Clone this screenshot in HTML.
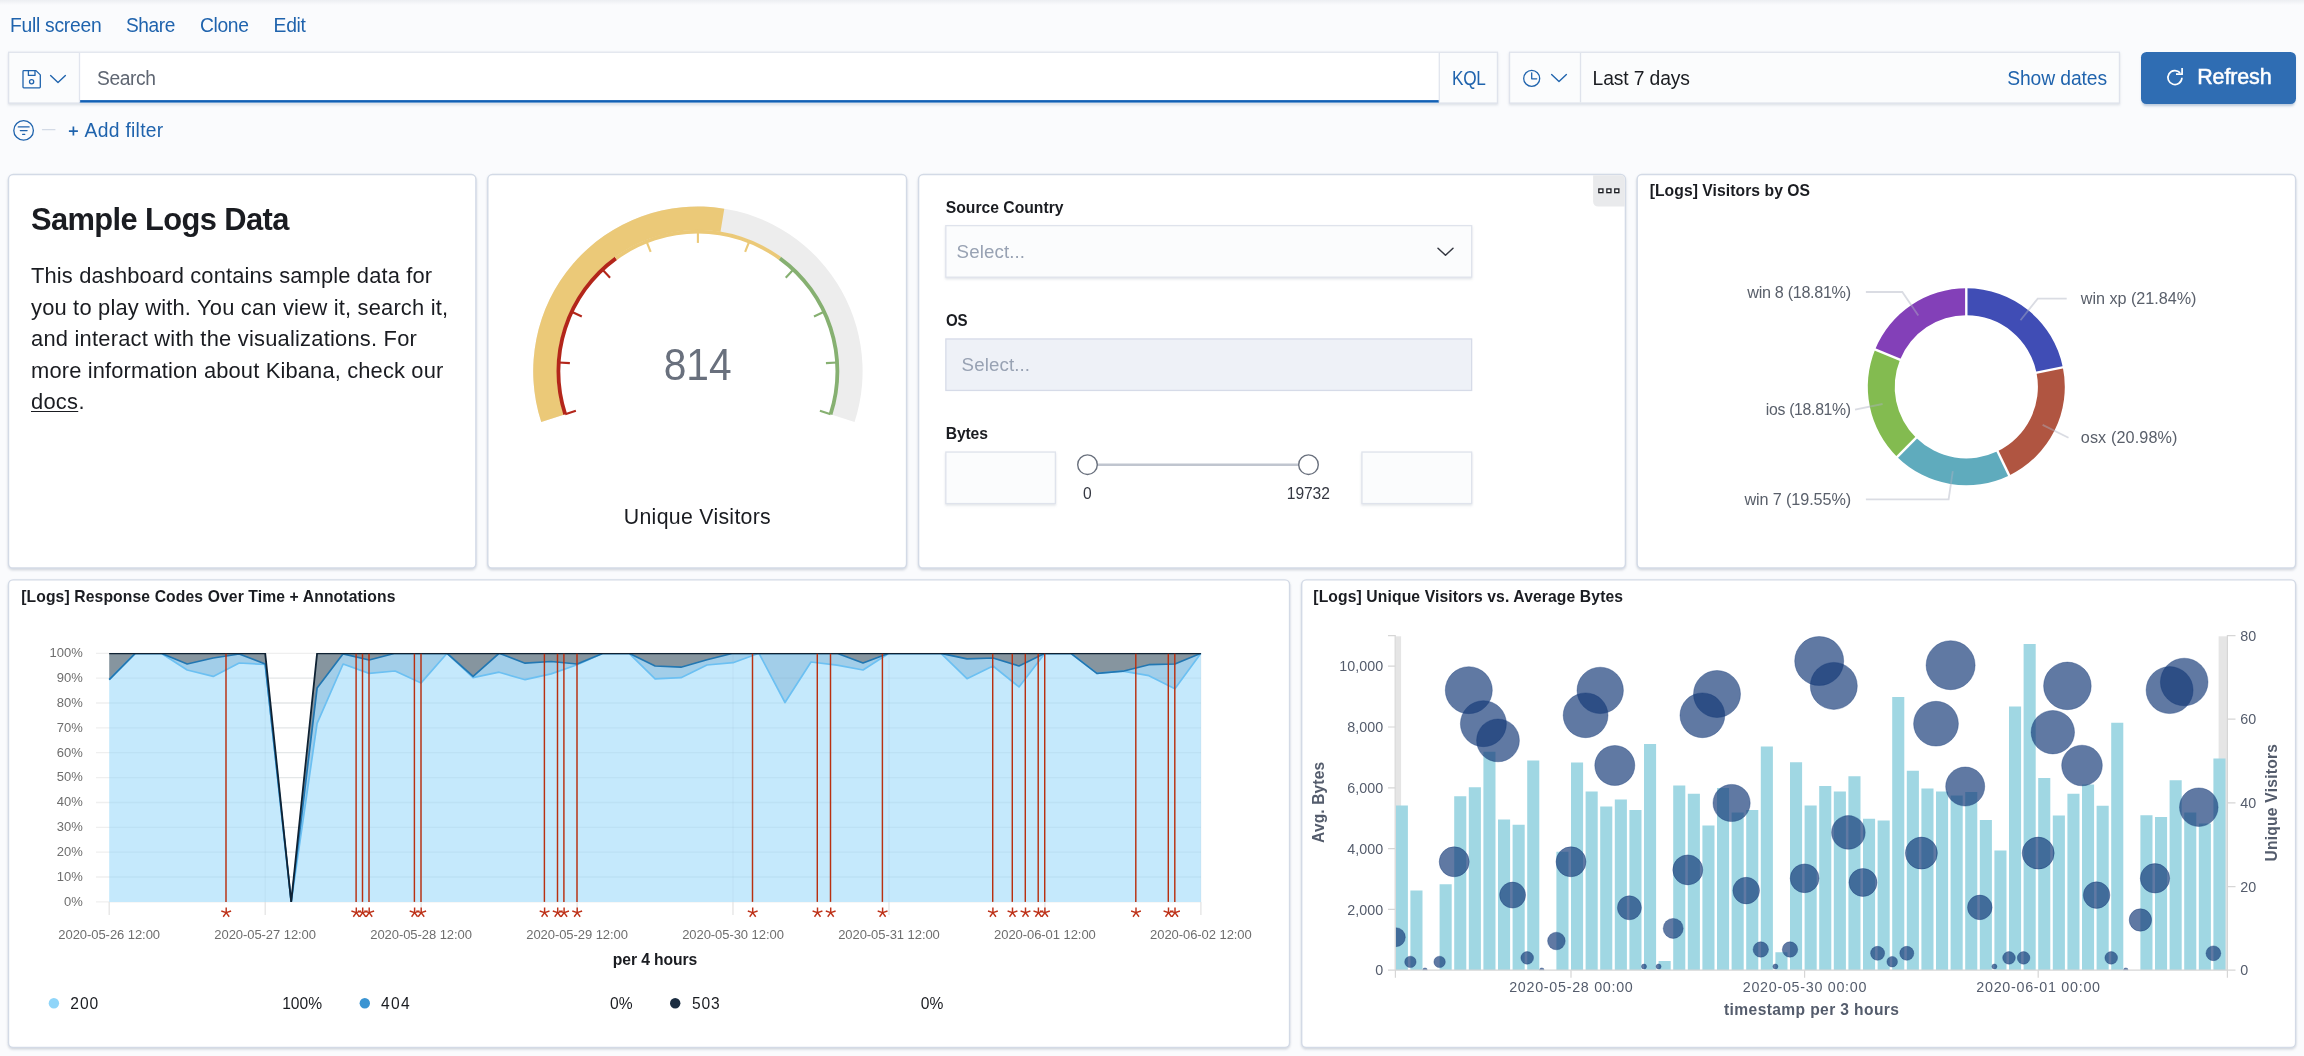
<!DOCTYPE html>
<html><head><meta charset="utf-8"><title>Kibana dashboard</title><style>
html,body{margin:0;padding:0}
body{width:2304px;height:1056px;overflow:hidden;background:#fafbfd;position:relative;font-family:"Liberation Sans",sans-serif;}
.t{position:absolute;white-space:nowrap;display:block}
.p{position:absolute;background:#fff;border-radius:5px;box-sizing:border-box;box-shadow:0 2.6px 2.6px -1.3px rgba(152,162,179,.3),0 1.3px 6.5px -2.6px rgba(152,162,179,.3)}
.b{position:absolute;box-sizing:border-box}
svg{position:absolute;left:0;top:0;overflow:visible}
svg text{font-family:"Liberation Sans",sans-serif}
</style></head><body><div id="root" style="position:absolute;left:0;top:0;width:2304px;height:1056px;will-change:transform">
<div class="b" style="left:0;top:0;width:2304px;height:5px;background:linear-gradient(#eceef2,#fafbfd)"></div>
<svg width="2304" height="1056" viewBox="0 0 2304 1056"><defs><filter id="ps" x="-2%" y="-3%" width="104%" height="108%"><feDropShadow dx="0" dy="1.5" stdDeviation="1.2" flood-color="#98a2b3" flood-opacity="0.42"/></filter><filter id="fs" x="-2%" y="-12%" width="104%" height="140%"><feDropShadow dx="0" dy="1.4" stdDeviation="1.1" flood-color="#98a2b3" flood-opacity="0.3"/></filter></defs><rect x="8.5" y="174.55" width="467.40" height="393.45" rx="4.6" fill="#fff" stroke="#d3dae6" stroke-width="1.4" filter="url(#ps)"/><rect x="487.8" y="174.55" width="418.75" height="393.45" rx="4.6" fill="#fff" stroke="#d3dae6" stroke-width="1.4" filter="url(#ps)"/><rect x="918.6" y="174.55" width="706.80" height="393.45" rx="4.6" fill="#fff" stroke="#d3dae6" stroke-width="1.4" filter="url(#ps)"/><rect x="1637.15" y="174.55" width="658.45" height="393.45" rx="4.6" fill="#fff" stroke="#d3dae6" stroke-width="1.4" filter="url(#ps)"/><rect x="8.5" y="579.85" width="1281.05" height="467.50" rx="4.6" fill="#fff" stroke="#d3dae6" stroke-width="1.4" filter="url(#ps)"/><rect x="1301.7" y="579.85" width="993.90" height="467.50" rx="4.6" fill="#fff" stroke="#d3dae6" stroke-width="1.4" filter="url(#ps)"/></svg>
<span class="t" style="left:10.00px;top:15px;font-size:19.30px;line-height:21px;color:#1f63ad;letter-spacing:-0.269px;">Full screen</span>
<span class="t" style="left:126.00px;top:15px;font-size:19.30px;line-height:21px;color:#1f63ad;letter-spacing:-0.386px;transform:scaleX(0.9908);transform-origin:0 0;">Share</span>
<span class="t" style="left:199.90px;top:15px;font-size:19.30px;line-height:21px;color:#1f63ad;letter-spacing:-0.332px;">Clone</span>
<span class="t" style="left:273.60px;top:15px;font-size:19.30px;line-height:21px;color:#1f63ad;letter-spacing:-0.319px;">Edit</span>
<svg width="2304" height="1056" viewBox="0 0 2304 1056"><rect x="8.65" y="52.25" width="1488.80" height="50.80" rx="0" fill="#fbfcfd" stroke="#dfe3ec" stroke-width="1.3" filter="url(#fs)"/></svg>
<svg width="2304" height="1056" viewBox="0 0 2304 1056"><rect x="79.5" y="52.9" width="1359.5" height="49.6" fill="#fff"/><rect x="79.5" y="100.1" width="1359.5" height="2.5" fill="#1260b5"/><path d="M79.5 52.9V102.4M1439.3 52.9V102.4" stroke="#e1e5ee" stroke-width="1.3"/></svg>
<span class="t" style="left:96.70px;top:67px;font-size:19.50px;line-height:22px;color:#5f6672;letter-spacing:-0.390px;transform:scaleX(0.9860);transform-origin:0 0;">Search</span>
<span class="t" style="left:1451.80px;top:68px;font-size:19.30px;line-height:21px;color:#1f63ad;letter-spacing:-0.386px;transform:scaleX(0.8931);transform-origin:0 0;">KQL</span>
<svg width="2304" height="1056" viewBox="0 0 2304 1056"><rect x="1509.55" y="52.25" width="609.90" height="50.80" rx="0" fill="#fbfcfd" stroke="#dfe3ec" stroke-width="1.3" filter="url(#fs)"/></svg>
<svg width="2304" height="1056" viewBox="0 0 2304 1056"><path d="M1580.5 52.9V102.4" stroke="#dfe3ec" stroke-width="1.3"/></svg>
<span class="t" style="left:1592.60px;top:68px;font-size:19.30px;line-height:21px;color:#1a1c21;letter-spacing:-0.131px;">Last 7 days</span>
<span class="t" style="left:2007.20px;top:68px;font-size:19.30px;line-height:21px;color:#1f63ad;letter-spacing:-0.095px;">Show dates</span>
<div class="b" style="left:2140.9px;top:51.5px;width:155.1px;height:52.2px;background:#2f6db3;border-radius:5.5px;box-shadow:0 2.6px 2.6px -1.3px rgba(39,87,142,.3)"></div>
<span class="t" style="left:2197.20px;top:65px;font-size:21.50px;line-height:24px;color:#fff;letter-spacing:-0.131px;-webkit-text-stroke:0.5px #fff;">Refresh</span>
<svg width="2304" height="160" viewBox="0 0 2304 160" fill="none" stroke-linecap="round" stroke-linejoin="round">
<g stroke="#1f63ad" stroke-width="1.3"><path d="M23.8 70.6h12.2l4.3 4.3v12.2a0.8 0.8 0 0 1-0.8 0.8H23.8a0.8 0.8 0 0 1-0.8-0.8V71.4a0.8 0.8 0 0 1 0.8-0.8z"/><path d="M28.4 70.8v4.6h6.6v-4.6"/><circle cx="31.6" cy="81.7" r="2.1"/></g>
<path d="M50.6 75.6l7.4 6.8 7.4-6.8" stroke="#1f63ad" stroke-width="1.4"/>
<g stroke="#1f63ad" stroke-width="1.3"><circle cx="1531.7" cy="78.4" r="8"/><path d="M1531.7 72.8v6h5"/></g>
<path d="M1551.6 74.6l7.4 6.8 7.4-6.8" stroke="#1f63ad" stroke-width="1.4"/>
<g stroke="#fff" stroke-width="1.7" stroke-linecap="butt"><path d="M2181.95 77.80A7.0 7.0 0 1 1 2180.15 72.88"/><path d="M2182.1 68.0V74.15H2176.0" stroke-linejoin="miter"/></g>
<g stroke="#1f63ad" stroke-width="1.3"><circle cx="23.6" cy="130.4" r="9.8"/><path d="M18.3 126.9h10.8M20.3 130.6h6.8M22.6 134.3h2.2"/></g>
<path d="M42.5 129.7h12.4" stroke="#d3dae6" stroke-width="1.3"/>
</svg>
<span class="t" style="left:84.60px;top:120px;font-size:19.30px;line-height:21px;color:#1f63ad;letter-spacing:0.282px;">Add filter</span>
<svg width="2304" height="160" viewBox="0 0 2304 160"><path d="M68.9 131.1H77.9M73.4 126.6V135.6" stroke="#1f63ad" stroke-width="1.7"/></svg>
<span class="t" style="left:31.20px;top:201px;font-size:32.20px;line-height:36px;color:#1a1c21;font-weight:700;letter-spacing:-0.644px;transform:scaleX(0.9592);transform-origin:0 0;">Sample Logs Data</span>
<span class="t" style="left:31.00px;top:263px;font-size:21.90px;line-height:25px;color:#1a1c21;letter-spacing:0.149px;">This dashboard contains sample data for</span>
<span class="t" style="left:31.00px;top:295px;font-size:21.90px;line-height:25px;color:#1a1c21;letter-spacing:0.186px;">you to play with. You can view it, search it,</span>
<span class="t" style="left:31.00px;top:326px;font-size:21.90px;line-height:25px;color:#1a1c21;letter-spacing:0.216px;">and interact with the visualizations. For</span>
<span class="t" style="left:31.00px;top:358px;font-size:21.90px;line-height:25px;color:#1a1c21;letter-spacing:0.151px;">more information about Kibana, check our</span>
<span class="t" style="left:31.00px;top:389px;font-size:21.90px;line-height:25px;color:#1a1c21;letter-spacing:0.247px;text-decoration:underline;text-underline-offset:2px;text-decoration-thickness:1.3px;">docs</span>
<span class="t" style="left:78.60px;top:389px;font-size:21.90px;line-height:25px;color:#1a1c21;">.</span>
<svg width="2304" height="1056" viewBox="0 0 2304 1056">
<path d="M541.26 422.10A164.7 164.7 0 1 1 854.54 422.10L832.00 414.77A141.0 141.0 0 1 0 563.80 414.77Z" fill="#ededed"/>
<path d="M541.26 422.10A164.7 164.7 0 0 1 724.28 208.63L720.48 232.02A141.0 141.0 0 0 0 563.80 414.77Z" fill="#ebc978"/>
<path d="M563.42 414.90A141.4 141.4 0 0 1 614.79 256.80L617.02 259.88A137.6 137.6 0 0 0 567.03 413.72Z" fill="#b3261a"/>
<path d="M614.79 256.80A141.4 141.4 0 0 1 781.01 256.80L778.78 259.88A137.6 137.6 0 0 0 617.02 259.88Z" fill="#ebc978"/>
<path d="M781.01 256.80A141.4 141.4 0 0 1 832.38 414.90L828.77 413.72A137.6 137.6 0 0 0 778.78 259.88Z" fill="#86b071"/>
<path d="M565.23 414.31L575.88 410.85" stroke="#b3261a" stroke-width="2.1"/>
<path d="M558.68 362.44L569.85 363.14" stroke="#b3261a" stroke-width="2.1"/>
<path d="M571.68 311.80L581.81 316.57" stroke="#b3261a" stroke-width="2.1"/>
<path d="M602.41 269.51L610.07 277.67" stroke="#b3261a" stroke-width="2.1"/>
<path d="M646.55 241.50L650.67 251.91" stroke="#ebc978" stroke-width="2.1"/>
<path d="M697.90 231.70L697.90 242.90" stroke="#ebc978" stroke-width="2.1"/>
<path d="M749.25 241.50L745.13 251.91" stroke="#ebc978" stroke-width="2.1"/>
<path d="M793.39 269.51L785.73 277.67" stroke="#86b071" stroke-width="2.1"/>
<path d="M824.12 311.80L813.99 316.57" stroke="#86b071" stroke-width="2.1"/>
<path d="M837.12 362.44L825.95 363.14" stroke="#86b071" stroke-width="2.1"/>
<path d="M830.57 414.31L819.92 410.85" stroke="#86b071" stroke-width="2.1"/>
<text x="0" y="0" text-anchor="middle" style="font-size:43.90px;fill:#69707d;" transform="translate(697.60 380) scale(0.9270 1)">814</text>
</svg>
<span class="t" style="left:623.80px;top:505px;font-size:21.30px;line-height:24px;color:#1a1c21;letter-spacing:0.295px;">Unique Visitors</span>
<span class="t" style="left:945.80px;top:199px;font-size:15.70px;line-height:17px;color:#1a1c21;font-weight:700;">Source Country</span>
<span class="t" style="left:945.80px;top:312px;font-size:15.70px;line-height:17px;color:#1a1c21;font-weight:700;letter-spacing:-0.314px;transform:scaleX(0.9611);transform-origin:0 0;">OS</span>
<span class="t" style="left:945.80px;top:425px;font-size:15.70px;line-height:17px;color:#1a1c21;font-weight:700;letter-spacing:-0.166px;">Bytes</span>
<svg width="2304" height="1056" viewBox="0 0 2304 1056"><rect x="945.85" y="225.65" width="525.80" height="51.50" rx="0" fill="#fbfcfd" stroke="#dfe3ec" stroke-width="1.3" filter="url(#fs)"/></svg>
<svg width="2304" height="1056" viewBox="0 0 2304 1056"><rect x="945.85" y="338.95" width="525.80" height="51.50" rx="0" fill="#eef1f7" stroke="#d6dbe8" stroke-width="1.3"/></svg>
<span class="t" style="left:956.60px;top:241px;font-size:18.70px;line-height:21px;color:#98a2b3;letter-spacing:0.118px;">Select...</span>
<span class="t" style="left:961.60px;top:354px;font-size:18.70px;line-height:21px;color:#98a2b3;letter-spacing:0.118px;">Select...</span>
<svg width="2304" height="1056" viewBox="0 0 2304 1056"><rect x="945.85" y="452.05" width="109.50" height="51.50" rx="0" fill="#fbfcfd" stroke="#dfe3ec" stroke-width="1.3" filter="url(#fs)"/></svg>
<svg width="2304" height="1056" viewBox="0 0 2304 1056"><rect x="1361.95" y="452.05" width="109.70" height="51.50" rx="0" fill="#fbfcfd" stroke="#dfe3ec" stroke-width="1.3" filter="url(#fs)"/></svg>
<svg width="2304" height="1056" viewBox="0 0 2304 1056" fill="none">
<path d="M1438 248.3l7.5 7 7.5-7" stroke="#343741" stroke-width="1.5" stroke-linecap="round" stroke-linejoin="round"/>
<path d="M1087.5 464.7H1308.5" stroke="#c0c5cf" stroke-width="2.4"/>
<circle cx="1087.5" cy="464.7" r="9.8" fill="#fff" stroke="#69707d" stroke-width="1.4"/>
<circle cx="1308.5" cy="464.7" r="9.8" fill="#fff" stroke="#69707d" stroke-width="1.4"/>
<path d="M1593.1 175.3H1620.8a4 4 0 0 1 4 4V206.6H1598.1a5 5 0 0 1-5-5Z" fill="#e9eaec"/>
<rect x="1598.8500000000001" y="188.95000000000002" width="4.1" height="3.7" fill="#fff" stroke="#1a1c21" stroke-width="1.3"/>
<rect x="1606.8500000000001" y="188.95000000000002" width="4.1" height="3.7" fill="#fff" stroke="#1a1c21" stroke-width="1.3"/>
<rect x="1614.75" y="188.95000000000002" width="4.1" height="3.7" fill="#fff" stroke="#1a1c21" stroke-width="1.3"/>
</svg>
<span class="t" style="left:1083.06px;top:485px;font-size:15.60px;line-height:17px;color:#343741;">0</span>
<span class="t" style="left:1286.80px;top:485px;font-size:15.60px;line-height:17px;color:#343741;letter-spacing:-0.070px;">19732</span>
<span class="t" style="left:1649.70px;top:182px;font-size:15.70px;line-height:17px;color:#1a1c21;font-weight:700;letter-spacing:0.057px;">[Logs] Visitors by OS</span>
<svg width="2304" height="1056" viewBox="0 0 2304 1056" fill="none">
<path d="M1966.30 288.30A98.5 98.5 0 0 1 2062.87 367.38L2036.50 372.69A71.6 71.6 0 0 0 1966.30 315.20Z" fill="#404db5"/>
<path d="M2062.87 367.38A98.5 98.5 0 0 1 2009.22 475.46L1997.50 451.25A71.6 71.6 0 0 0 2036.50 372.69Z" fill="#b05541"/>
<path d="M2009.22 475.46A98.5 98.5 0 0 1 1897.19 456.99L1916.07 437.82A71.6 71.6 0 0 0 1997.50 451.25Z" fill="#5fabbd"/>
<path d="M1897.19 456.99A98.5 98.5 0 0 1 1875.15 349.46L1900.04 359.66A71.6 71.6 0 0 0 1916.07 437.82Z" fill="#83bb50"/>
<path d="M1875.15 349.46A98.5 98.5 0 0 1 1966.30 288.30L1966.30 315.20A71.6 71.6 0 0 0 1900.04 359.66Z" fill="#8340b8"/>
<path d="M1966.30 287.30L1966.30 316.20" stroke="#fff" stroke-width="2.4"/>
<path d="M2063.85 367.19L2035.51 372.88" stroke="#fff" stroke-width="2.4"/>
<path d="M2009.66 476.36L1997.06 450.35" stroke="#fff" stroke-width="2.4"/>
<path d="M1896.49 457.70L1916.77 437.11" stroke="#fff" stroke-width="2.4"/>
<path d="M1874.23 349.08L1900.97 360.04" stroke="#fff" stroke-width="2.4"/>
<path d="M1865.9 292H1902.3L1918.3 315.4" stroke="#aeb2c0" stroke-width="1.8" stroke-opacity="0.45"/>
<path d="M2066.7 298.6H2037.7L2020.5 320.3" stroke="#aeb2c0" stroke-width="1.8" stroke-opacity="0.45"/>
<path d="M1855 409.7L1882.6 404" stroke="#aeb2c0" stroke-width="1.8" stroke-opacity="0.45"/>
<path d="M2068.5 437.7L2042.6 424.9" stroke="#aeb2c0" stroke-width="1.8" stroke-opacity="0.45"/>
<path d="M1865.9 499.3H1948.6L1952.8 471.2" stroke="#aeb2c0" stroke-width="1.8" stroke-opacity="0.45"/>
<text x="1850.78" y="298.00" text-anchor="end" style="font-size:16.20px;fill:#5a606b;letter-spacing:-0.320px;" >win 8 (18.81%)</text>
<text x="-0.32" y="0" text-anchor="end" style="font-size:16.20px;fill:#5a606b;letter-spacing:-0.324px;" transform="translate(1851.10 415) scale(0.9773 1)">ios (18.81%)</text>
<text x="1851.00" y="505.00" text-anchor="end" style="font-size:16.20px;fill:#5a606b;letter-spacing:-0.097px;" >win 7 (19.55%)</text>
<text x="2080.80" y="304.00" text-anchor="start" style="font-size:16.20px;fill:#5a606b;letter-spacing:-0.033px;" >win xp (21.84%)</text>
<text x="2080.80" y="443.00" text-anchor="start" style="font-size:16.20px;fill:#5a606b;letter-spacing:0.114px;" >osx (20.98%)</text>
</svg>
<span class="t" style="left:21.20px;top:588px;font-size:15.70px;line-height:17px;color:#1a1c21;font-weight:700;letter-spacing:0.115px;">[Logs] Response Codes Over Time + Annotations</span>
<svg width="2304" height="1056" viewBox="0 0 2304 1056" fill="none">
<path d="M96 901.9H1200.9" stroke="#efefef" stroke-width="1.3"/>
<path d="M96 877.0H1200.9" stroke="#efefef" stroke-width="1.3"/>
<path d="M96 852.2H1200.9" stroke="#efefef" stroke-width="1.3"/>
<path d="M96 827.3H1200.9" stroke="#efefef" stroke-width="1.3"/>
<path d="M96 802.5H1200.9" stroke="#efefef" stroke-width="1.3"/>
<path d="M96 777.6H1200.9" stroke="#efefef" stroke-width="1.3"/>
<path d="M96 752.7H1200.9" stroke="#efefef" stroke-width="1.3"/>
<path d="M96 727.9H1200.9" stroke="#efefef" stroke-width="1.3"/>
<path d="M96 703.0H1200.9" stroke="#efefef" stroke-width="1.3"/>
<path d="M96 678.2H1200.9" stroke="#efefef" stroke-width="1.3"/>
<path d="M96 653.3H1200.9" stroke="#efefef" stroke-width="1.3"/>
<path d="M109.2 901.9V915" stroke="#e2e2e2" stroke-width="1.2"/>
<path d="M265.2 901.9V915" stroke="#e2e2e2" stroke-width="1.2"/>
<path d="M421.1 901.9V915" stroke="#e2e2e2" stroke-width="1.2"/>
<path d="M577.1 901.9V915" stroke="#e2e2e2" stroke-width="1.2"/>
<path d="M733.0 901.9V915" stroke="#e2e2e2" stroke-width="1.2"/>
<path d="M889.0 901.9V915" stroke="#e2e2e2" stroke-width="1.2"/>
<path d="M1044.9 901.9V915" stroke="#e2e2e2" stroke-width="1.2"/>
<path d="M1200.9 901.9V915" stroke="#e2e2e2" stroke-width="1.2"/>
<polygon points="109.2,901.9 109.2,679.7 135.2,653.3 161.2,653.3 187.2,670.0 213.2,676.4 239.2,663.0 265.2,664.5 291.2,901.9 317.1,723.4 343.1,664.0 369.1,673.4 395.1,671.0 421.1,682.9 447.1,653.3 473.1,677.7 499.1,672.2 525.1,679.7 551.1,673.9 577.1,664.7 603.1,653.3 629.1,653.3 655.1,678.9 681.0,677.7 707.0,665.0 733.0,662.7 759.0,653.3 785.0,702.5 811.0,662.0 837.0,665.2 863.0,670.0 889.0,653.3 915.0,653.3 941.0,653.3 967.0,678.7 993.0,666.0 1019.0,686.9 1044.9,653.3 1070.9,653.3 1096.9,673.4 1122.9,671.2 1148.9,675.7 1174.9,688.8 1200.9,653.3 1200.9,901.9" fill="#c5e9fc"/>
<polygon points="109.2,679.7 135.2,653.3 161.2,653.3 187.2,670.0 213.2,676.4 239.2,663.0 265.2,664.5 291.2,901.9 317.1,723.4 343.1,664.0 369.1,673.4 395.1,671.0 421.1,682.9 447.1,653.3 473.1,677.7 499.1,672.2 525.1,679.7 551.1,673.9 577.1,664.7 603.1,653.3 629.1,653.3 655.1,678.9 681.0,677.7 707.0,665.0 733.0,662.7 759.0,653.3 785.0,702.5 811.0,662.0 837.0,665.2 863.0,670.0 889.0,653.3 915.0,653.3 941.0,653.3 967.0,678.7 993.0,666.0 1019.0,686.9 1044.9,653.3 1070.9,653.3 1096.9,673.4 1122.9,671.2 1148.9,675.7 1174.9,688.8 1200.9,653.3 1200.9,653.3 1174.9,664.0 1148.9,664.7 1122.9,671.2 1096.9,673.4 1070.9,653.3 1044.9,653.3 1019.0,666.0 993.0,658.0 967.0,658.8 941.0,653.3 915.0,653.3 889.0,653.3 863.0,663.0 837.0,653.3 811.0,653.3 785.0,653.3 759.0,653.3 733.0,653.3 707.0,659.8 681.0,667.2 655.1,666.0 629.1,653.3 603.1,653.3 577.1,664.0 551.1,661.5 525.1,663.2 499.1,653.3 473.1,676.4 447.1,653.3 421.1,653.3 395.1,653.3 369.1,660.0 343.1,653.8 317.1,688.1 291.2,901.9 265.2,664.0 239.2,654.0 213.2,658.0 187.2,664.0 161.2,653.3 135.2,653.3 109.2,679.7" fill="#a2cee9"/>
<polygon points="109.2,679.7 135.2,653.3 161.2,653.3 187.2,664.0 213.2,658.0 239.2,654.0 265.2,664.0 291.2,901.9 317.1,688.1 343.1,653.8 369.1,660.0 395.1,653.3 421.1,653.3 447.1,653.3 473.1,676.4 499.1,653.3 525.1,663.2 551.1,661.5 577.1,664.0 603.1,653.3 629.1,653.3 655.1,666.0 681.0,667.2 707.0,659.8 733.0,653.3 759.0,653.3 785.0,653.3 811.0,653.3 837.0,653.3 863.0,663.0 889.0,653.3 915.0,653.3 941.0,653.3 967.0,658.8 993.0,658.0 1019.0,666.0 1044.9,653.3 1070.9,653.3 1096.9,673.4 1122.9,671.2 1148.9,664.7 1174.9,664.0 1200.9,653.3 1200.9,653.3 1174.9,653.3 1148.9,653.3 1122.9,653.3 1096.9,653.3 1070.9,653.3 1044.9,653.3 1019.0,653.3 993.0,653.3 967.0,653.3 941.0,653.3 915.0,653.3 889.0,653.3 863.0,653.3 837.0,653.3 811.0,653.3 785.0,653.3 759.0,653.3 733.0,653.3 707.0,653.3 681.0,653.3 655.1,653.3 629.1,653.3 603.1,653.3 577.1,653.3 551.1,653.3 525.1,653.3 499.1,653.3 473.1,653.3 447.1,653.3 421.1,653.3 395.1,653.3 369.1,653.3 343.1,653.3 317.1,653.3 291.2,901.9 265.2,653.3 239.2,653.3 213.2,653.3 187.2,653.3 161.2,653.3 135.2,653.3 109.2,653.3" fill="#86959f"/>
<path d="M109.2 877.0H1200.9" stroke="#5a7a90" stroke-opacity="0.07" stroke-width="1.3"/>
<path d="M109.2 852.2H1200.9" stroke="#5a7a90" stroke-opacity="0.07" stroke-width="1.3"/>
<path d="M109.2 827.3H1200.9" stroke="#5a7a90" stroke-opacity="0.07" stroke-width="1.3"/>
<path d="M109.2 802.5H1200.9" stroke="#5a7a90" stroke-opacity="0.07" stroke-width="1.3"/>
<path d="M109.2 777.6H1200.9" stroke="#5a7a90" stroke-opacity="0.07" stroke-width="1.3"/>
<path d="M109.2 752.7H1200.9" stroke="#5a7a90" stroke-opacity="0.07" stroke-width="1.3"/>
<path d="M109.2 727.9H1200.9" stroke="#5a7a90" stroke-opacity="0.07" stroke-width="1.3"/>
<path d="M109.2 703.0H1200.9" stroke="#5a7a90" stroke-opacity="0.07" stroke-width="1.3"/>
<path d="M109.2 678.2H1200.9" stroke="#5a7a90" stroke-opacity="0.07" stroke-width="1.3"/>
<path d="M265.2 901.9V653.3" stroke="#5a7a90" stroke-opacity="0.06" stroke-width="1.3"/>
<path d="M421.1 901.9V653.3" stroke="#5a7a90" stroke-opacity="0.06" stroke-width="1.3"/>
<path d="M577.1 901.9V653.3" stroke="#5a7a90" stroke-opacity="0.06" stroke-width="1.3"/>
<path d="M733.0 901.9V653.3" stroke="#5a7a90" stroke-opacity="0.06" stroke-width="1.3"/>
<path d="M889.0 901.9V653.3" stroke="#5a7a90" stroke-opacity="0.06" stroke-width="1.3"/>
<path d="M1044.9 901.9V653.3" stroke="#5a7a90" stroke-opacity="0.06" stroke-width="1.3"/>
<path d="M1200.9 901.9V653.3" stroke="#5a7a90" stroke-opacity="0.06" stroke-width="1.3"/>
<defs><clipPath id="c5"><rect x="108.2" y="652.9" width="1093.7" height="249.00000000000003"/></clipPath></defs><g clip-path="url(#c5)">
<polyline points="109.2,679.7 135.2,653.3 161.2,653.3 187.2,670.0 213.2,676.4 239.2,663.0 265.2,664.5 291.2,901.9 317.1,723.4 343.1,664.0 369.1,673.4 395.1,671.0 421.1,682.9 447.1,653.3 473.1,677.7 499.1,672.2 525.1,679.7 551.1,673.9 577.1,664.7 603.1,653.3 629.1,653.3 655.1,678.9 681.0,677.7 707.0,665.0 733.0,662.7 759.0,653.3 785.0,702.5 811.0,662.0 837.0,665.2 863.0,670.0 889.0,653.3 915.0,653.3 941.0,653.3 967.0,678.7 993.0,666.0 1019.0,686.9 1044.9,653.3 1070.9,653.3 1096.9,673.4 1122.9,671.2 1148.9,675.7 1174.9,688.8 1200.9,653.3" stroke="#6cc0f2" stroke-width="1.7" stroke-linejoin="round"/>
<polyline points="109.2,679.7 135.2,653.3 161.2,653.3 187.2,664.0 213.2,658.0 239.2,654.0 265.2,664.0 291.2,901.9 317.1,688.1 343.1,653.8 369.1,660.0 395.1,653.3 421.1,653.3 447.1,653.3 473.1,676.4 499.1,653.3 525.1,663.2 551.1,661.5 577.1,664.0 603.1,653.3 629.1,653.3 655.1,666.0 681.0,667.2 707.0,659.8 733.0,653.3 759.0,653.3 785.0,653.3 811.0,653.3 837.0,653.3 863.0,663.0 889.0,653.3 915.0,653.3 941.0,653.3 967.0,658.8 993.0,658.0 1019.0,666.0 1044.9,653.3 1070.9,653.3 1096.9,673.4 1122.9,671.2 1148.9,664.7 1174.9,664.0 1200.9,653.3" stroke="#2277b2" stroke-width="1.7" stroke-linejoin="round"/>
<polyline points="109.2,653.3 135.2,653.3 161.2,653.3 187.2,653.3 213.2,653.3 239.2,653.3 265.2,653.3 291.2,901.9 317.1,653.3 343.1,653.3 369.1,653.3 395.1,653.3 421.1,653.3 447.1,653.3 473.1,653.3 499.1,653.3 525.1,653.3 551.1,653.3 577.1,653.3 603.1,653.3 629.1,653.3 655.1,653.3 681.0,653.3 707.0,653.3 733.0,653.3 759.0,653.3 785.0,653.3 811.0,653.3 837.0,653.3 863.0,653.3 889.0,653.3 915.0,653.3 941.0,653.3 967.0,653.3 993.0,653.3 1019.0,653.3 1044.9,653.3 1070.9,653.3 1096.9,653.3 1122.9,653.3 1148.9,653.3 1174.9,653.3 1200.9,653.3" stroke="#0f2233" stroke-width="1.8" stroke-linejoin="miter"/></g>
<path d="M226 653.8V901.9" stroke="#b93010" stroke-width="1.45"/>
<path d="M356.1 653.8V901.9" stroke="#b93010" stroke-width="1.45"/>
<path d="M362.5 653.8V901.9" stroke="#b93010" stroke-width="1.45"/>
<path d="M369 653.8V901.9" stroke="#b93010" stroke-width="1.45"/>
<path d="M414.4 653.8V901.9" stroke="#b93010" stroke-width="1.45"/>
<path d="M421 653.8V901.9" stroke="#b93010" stroke-width="1.45"/>
<path d="M544.4 653.8V901.9" stroke="#b93010" stroke-width="1.45"/>
<path d="M557.5 653.8V901.9" stroke="#b93010" stroke-width="1.45"/>
<path d="M563.9 653.8V901.9" stroke="#b93010" stroke-width="1.45"/>
<path d="M577 653.8V901.9" stroke="#b93010" stroke-width="1.45"/>
<path d="M752.5 653.8V901.9" stroke="#b93010" stroke-width="1.45"/>
<path d="M817.3 653.8V901.9" stroke="#b93010" stroke-width="1.45"/>
<path d="M830.5 653.8V901.9" stroke="#b93010" stroke-width="1.45"/>
<path d="M882.4 653.8V901.9" stroke="#b93010" stroke-width="1.45"/>
<path d="M992.7 653.8V901.9" stroke="#b93010" stroke-width="1.45"/>
<path d="M1012.3 653.8V901.9" stroke="#b93010" stroke-width="1.45"/>
<path d="M1025.3 653.8V901.9" stroke="#b93010" stroke-width="1.45"/>
<path d="M1038.2 653.8V901.9" stroke="#b93010" stroke-width="1.45"/>
<path d="M1044.7 653.8V901.9" stroke="#b93010" stroke-width="1.45"/>
<path d="M1135.8 653.8V901.9" stroke="#b93010" stroke-width="1.45"/>
<path d="M1168.3 653.8V901.9" stroke="#b93010" stroke-width="1.45"/>
<path d="M1174.8 653.8V901.9" stroke="#b93010" stroke-width="1.45"/>
<path d="M226.2 912.6L226.2 907.5M226.2 912.6L231.1 911.0M226.2 912.6L229.2 916.7M226.2 912.6L223.2 916.7M226.2 912.6L221.3 911.0M356.3 912.6L356.3 907.5M356.3 912.6L361.2 911.0M356.3 912.6L359.3 916.7M356.3 912.6L353.3 916.7M356.3 912.6L351.4 911.0M362.7 912.6L362.7 907.5M362.7 912.6L367.6 911.0M362.7 912.6L365.7 916.7M362.7 912.6L359.7 916.7M362.7 912.6L357.8 911.0M369.2 912.6L369.2 907.5M369.2 912.6L374.1 911.0M369.2 912.6L372.2 916.7M369.2 912.6L366.2 916.7M369.2 912.6L364.3 911.0M414.6 912.6L414.6 907.5M414.6 912.6L419.5 911.0M414.6 912.6L417.6 916.7M414.6 912.6L411.6 916.7M414.6 912.6L409.7 911.0M421.2 912.6L421.2 907.5M421.2 912.6L426.1 911.0M421.2 912.6L424.2 916.7M421.2 912.6L418.2 916.7M421.2 912.6L416.3 911.0M544.6 912.6L544.6 907.5M544.6 912.6L549.5 911.0M544.6 912.6L547.6 916.7M544.6 912.6L541.6 916.7M544.6 912.6L539.7 911.0M557.7 912.6L557.7 907.5M557.7 912.6L562.6 911.0M557.7 912.6L560.7 916.7M557.7 912.6L554.7 916.7M557.7 912.6L552.8 911.0M564.1 912.6L564.1 907.5M564.1 912.6L569.0 911.0M564.1 912.6L567.1 916.7M564.1 912.6L561.1 916.7M564.1 912.6L559.2 911.0M577.2 912.6L577.2 907.5M577.2 912.6L582.1 911.0M577.2 912.6L580.2 916.7M577.2 912.6L574.2 916.7M577.2 912.6L572.3 911.0M752.7 912.6L752.7 907.5M752.7 912.6L757.6 911.0M752.7 912.6L755.7 916.7M752.7 912.6L749.7 916.7M752.7 912.6L747.8 911.0M817.5 912.6L817.5 907.5M817.5 912.6L822.4 911.0M817.5 912.6L820.5 916.7M817.5 912.6L814.5 916.7M817.5 912.6L812.6 911.0M830.7 912.6L830.7 907.5M830.7 912.6L835.6 911.0M830.7 912.6L833.7 916.7M830.7 912.6L827.7 916.7M830.7 912.6L825.8 911.0M882.6 912.6L882.6 907.5M882.6 912.6L887.5 911.0M882.6 912.6L885.6 916.7M882.6 912.6L879.6 916.7M882.6 912.6L877.7 911.0M992.9 912.6L992.9 907.5M992.9 912.6L997.8 911.0M992.9 912.6L995.9 916.7M992.9 912.6L989.9 916.7M992.9 912.6L988.0 911.0M1012.5 912.6L1012.5 907.5M1012.5 912.6L1017.4 911.0M1012.5 912.6L1015.5 916.7M1012.5 912.6L1009.5 916.7M1012.5 912.6L1007.6 911.0M1025.5 912.6L1025.5 907.5M1025.5 912.6L1030.4 911.0M1025.5 912.6L1028.5 916.7M1025.5 912.6L1022.5 916.7M1025.5 912.6L1020.6 911.0M1038.4 912.6L1038.4 907.5M1038.4 912.6L1043.3 911.0M1038.4 912.6L1041.4 916.7M1038.4 912.6L1035.4 916.7M1038.4 912.6L1033.5 911.0M1044.9 912.6L1044.9 907.5M1044.9 912.6L1049.8 911.0M1044.9 912.6L1047.9 916.7M1044.9 912.6L1041.9 916.7M1044.9 912.6L1040.0 911.0M1136.0 912.6L1136.0 907.5M1136.0 912.6L1140.9 911.0M1136.0 912.6L1139.0 916.7M1136.0 912.6L1133.0 916.7M1136.0 912.6L1131.1 911.0M1168.5 912.6L1168.5 907.5M1168.5 912.6L1173.4 911.0M1168.5 912.6L1171.5 916.7M1168.5 912.6L1165.5 916.7M1168.5 912.6L1163.6 911.0M1175.0 912.6L1175.0 907.5M1175.0 912.6L1179.9 911.0M1175.0 912.6L1178.0 916.7M1175.0 912.6L1172.0 916.7M1175.0 912.6L1170.1 911.0" stroke="#be3219" stroke-width="1.45"/>
<text x="82.80" y="906.00" text-anchor="end" style="font-size:13.00px;fill:#6e6e6e;" >0%</text>
<text x="82.80" y="881.00" text-anchor="end" style="font-size:13.00px;fill:#6e6e6e;" >10%</text>
<text x="82.80" y="856.00" text-anchor="end" style="font-size:13.00px;fill:#6e6e6e;" >20%</text>
<text x="82.80" y="831.00" text-anchor="end" style="font-size:13.00px;fill:#6e6e6e;" >30%</text>
<text x="82.80" y="806.00" text-anchor="end" style="font-size:13.00px;fill:#6e6e6e;" >40%</text>
<text x="82.80" y="781.00" text-anchor="end" style="font-size:13.00px;fill:#6e6e6e;" >50%</text>
<text x="82.80" y="757.00" text-anchor="end" style="font-size:13.00px;fill:#6e6e6e;" >60%</text>
<text x="82.80" y="732.00" text-anchor="end" style="font-size:13.00px;fill:#6e6e6e;" >70%</text>
<text x="82.80" y="707.00" text-anchor="end" style="font-size:13.00px;fill:#6e6e6e;" >80%</text>
<text x="82.80" y="682.00" text-anchor="end" style="font-size:13.00px;fill:#6e6e6e;" >90%</text>
<text x="82.80" y="657.00" text-anchor="end" style="font-size:13.00px;fill:#6e6e6e;" >100%</text>
<text x="109.17" y="939.00" text-anchor="middle" style="font-size:13.00px;fill:#6e6e6e;letter-spacing:-0.063px;" >2020-05-26 12:00</text>
<text x="265.13" y="939.00" text-anchor="middle" style="font-size:13.00px;fill:#6e6e6e;letter-spacing:-0.063px;" >2020-05-27 12:00</text>
<text x="421.08" y="939.00" text-anchor="middle" style="font-size:13.00px;fill:#6e6e6e;letter-spacing:-0.063px;" >2020-05-28 12:00</text>
<text x="577.04" y="939.00" text-anchor="middle" style="font-size:13.00px;fill:#6e6e6e;letter-spacing:-0.063px;" >2020-05-29 12:00</text>
<text x="733.00" y="939.00" text-anchor="middle" style="font-size:13.00px;fill:#6e6e6e;letter-spacing:-0.063px;" >2020-05-30 12:00</text>
<text x="888.95" y="939.00" text-anchor="middle" style="font-size:13.00px;fill:#6e6e6e;letter-spacing:-0.063px;" >2020-05-31 12:00</text>
<text x="1044.91" y="939.00" text-anchor="middle" style="font-size:13.00px;fill:#6e6e6e;letter-spacing:-0.063px;" >2020-06-01 12:00</text>
<text x="1200.87" y="939.00" text-anchor="middle" style="font-size:13.00px;fill:#6e6e6e;letter-spacing:-0.063px;" >2020-06-02 12:00</text>
<circle cx="53.9" cy="1003.2" r="5.2" fill="#8fd5f9"/><circle cx="364.8" cy="1003.2" r="5.2" fill="#3a94d2"/><circle cx="675.2" cy="1003.2" r="5.2" fill="#1b2d41"/>
</svg>
<span class="t" style="left:612.80px;top:951px;font-size:15.70px;line-height:17px;color:#1a1c21;font-weight:700;letter-spacing:-0.090px;">per 4 hours</span>
<span class="t" style="left:70.20px;top:995px;font-size:15.60px;line-height:17px;color:#1a1c21;letter-spacing:1.036px;">200</span>
<span class="t" style="left:282.20px;top:995px;font-size:15.60px;line-height:17px;color:#1a1c21;">100%</span>
<span class="t" style="left:381.10px;top:995px;font-size:15.60px;line-height:17px;color:#1a1c21;letter-spacing:1.286px;">404</span>
<span class="t" style="left:610.05px;top:995px;font-size:15.60px;line-height:17px;color:#1a1c21;">0%</span>
<span class="t" style="left:691.90px;top:995px;font-size:15.60px;line-height:17px;color:#1a1c21;letter-spacing:0.886px;">503</span>
<span class="t" style="left:920.75px;top:995px;font-size:15.60px;line-height:17px;color:#1a1c21;">0%</span>
<span class="t" style="left:1313.30px;top:588px;font-size:15.70px;line-height:17px;color:#1a1c21;font-weight:700;letter-spacing:0.111px;">[Logs] Unique Visitors vs. Average Bytes</span>
<svg width="2304" height="1056" viewBox="0 0 2304 1056" fill="none">
<defs><clipPath id="c6"><rect x="1395.7" y="620" width="831.8" height="350.2"/></clipPath></defs>
<rect x="1395.7" y="636.3" width="5.4" height="333.9" fill="#e5e5e5"/>
<rect x="2218.6" y="636.3" width="8.9" height="333.9" fill="#e5e5e5"/>
<g clip-path="url(#c6)">
<path d="M1395.80 970.2v-164.8h12.1v164.8zM1410.40 970.2v-79.6h12.1v79.6zM1439.60 970.2v-85.9h12.1v85.9zM1454.20 970.2v-173.9h12.1v173.9zM1468.80 970.2v-183.0h12.1v183.0zM1483.40 970.2v-218.5h12.1v218.5zM1498.00 970.2v-150.8h12.1v150.8zM1512.60 970.2v-145.5h12.1v145.5zM1527.20 970.2v-209.7h12.1v209.7zM1556.40 970.2v-118.5h12.1v118.5zM1571.00 970.2v-207.6h12.1v207.6zM1585.60 970.2v-178.8h12.1v178.8zM1600.20 970.2v-163.7h12.1v163.7zM1614.80 970.2v-170.8h12.1v170.8zM1629.40 970.2v-160.2h12.1v160.2zM1644.00 970.2v-226.1h12.1v226.1zM1658.60 970.2v-9.1h12.1v9.1zM1673.20 970.2v-184.8h12.1v184.8zM1687.80 970.2v-176.4h12.1v176.4zM1702.40 970.2v-144.8h12.1v144.8zM1717.00 970.2v-182.3h12.1v182.3zM1731.60 970.2v-157.8h12.1v157.8zM1746.20 970.2v-160.2h12.1v160.2zM1760.80 970.2v-223.7h12.1v223.7zM1775.40 970.2v-17.9h12.1v17.9zM1790.00 970.2v-207.9h12.1v207.9zM1804.60 970.2v-164.8h12.1v164.8zM1819.20 970.2v-184.1h12.1v184.1zM1833.80 970.2v-178.8h12.1v178.8zM1848.40 970.2v-193.9h12.1v193.9zM1863.00 970.2v-151.5h12.1v151.5zM1877.60 970.2v-149.7h12.1v149.7zM1892.20 970.2v-273.1h12.1v273.1zM1906.80 970.2v-199.5h12.1v199.5zM1921.40 970.2v-181.6h12.1v181.6zM1936.00 970.2v-178.8h12.1v178.8zM1950.60 970.2v-174.6h12.1v174.6zM1965.20 970.2v-178.1h12.1v178.1zM1979.80 970.2v-150.1h12.1v150.1zM1994.40 970.2v-119.6h12.1v119.6zM2009.00 970.2v-263.7h12.1v263.7zM2023.60 970.2v-326.1h12.1v326.1zM2038.20 970.2v-192.2h12.1v192.2zM2052.80 970.2v-154.6h12.1v154.6zM2067.40 970.2v-176.4h12.1v176.4zM2082.00 970.2v-185.8h12.1v185.8zM2096.60 970.2v-164.4h12.1v164.4zM2111.20 970.2v-247.5h12.1v247.5zM2140.40 970.2v-155.0h12.1v155.0zM2155.00 970.2v-153.2h12.1v153.2zM2169.60 970.2v-190.0h12.1v190.0zM2184.20 970.2v-157.8h12.1v157.8zM2198.80 970.2v-146.6h12.1v146.6zM2213.40 970.2v-211.8h12.1v211.8z" fill="#a0d7e3"/>
<circle cx="1395.8" cy="937.2" r="9.5" fill="#143a78" fill-opacity="0.68" stroke="#143a78" stroke-opacity="0.35" stroke-width="1"/>
<circle cx="1410.4" cy="961.9" r="5.7" fill="#143a78" fill-opacity="0.68" stroke="#143a78" stroke-opacity="0.35" stroke-width="1"/>
<circle cx="1425.0" cy="970.2" r="2.3" fill="#143a78" fill-opacity="0.68" stroke="#143a78" stroke-opacity="0.35" stroke-width="1"/>
<circle cx="1439.6" cy="961.9" r="5.7" fill="#143a78" fill-opacity="0.68" stroke="#143a78" stroke-opacity="0.35" stroke-width="1"/>
<circle cx="1454.2" cy="861.8" r="15" fill="#143a78" fill-opacity="0.68" stroke="#143a78" stroke-opacity="0.35" stroke-width="1"/>
<circle cx="1468.8" cy="690.2" r="23.5" fill="#143a78" fill-opacity="0.68" stroke="#143a78" stroke-opacity="0.35" stroke-width="1"/>
<circle cx="1483.4" cy="723.7" r="23" fill="#143a78" fill-opacity="0.68" stroke="#143a78" stroke-opacity="0.35" stroke-width="1"/>
<circle cx="1498.0" cy="740.4" r="21.4" fill="#143a78" fill-opacity="0.68" stroke="#143a78" stroke-opacity="0.35" stroke-width="1"/>
<circle cx="1512.6" cy="895.1" r="13" fill="#143a78" fill-opacity="0.68" stroke="#143a78" stroke-opacity="0.35" stroke-width="1"/>
<circle cx="1527.2" cy="957.9" r="6.3" fill="#143a78" fill-opacity="0.68" stroke="#143a78" stroke-opacity="0.35" stroke-width="1"/>
<circle cx="1541.8" cy="970.2" r="2.3" fill="#143a78" fill-opacity="0.68" stroke="#143a78" stroke-opacity="0.35" stroke-width="1"/>
<circle cx="1556.4" cy="941" r="8.8" fill="#143a78" fill-opacity="0.68" stroke="#143a78" stroke-opacity="0.35" stroke-width="1"/>
<circle cx="1571.0" cy="861.8" r="15" fill="#143a78" fill-opacity="0.68" stroke="#143a78" stroke-opacity="0.35" stroke-width="1"/>
<circle cx="1585.6" cy="715.3" r="22.4" fill="#143a78" fill-opacity="0.68" stroke="#143a78" stroke-opacity="0.35" stroke-width="1"/>
<circle cx="1600.2" cy="690.4" r="23.2" fill="#143a78" fill-opacity="0.68" stroke="#143a78" stroke-opacity="0.35" stroke-width="1"/>
<circle cx="1614.8" cy="765.5" r="20" fill="#143a78" fill-opacity="0.68" stroke="#143a78" stroke-opacity="0.35" stroke-width="1"/>
<circle cx="1629.4" cy="907.8" r="12" fill="#143a78" fill-opacity="0.68" stroke="#143a78" stroke-opacity="0.35" stroke-width="1"/>
<circle cx="1644.0" cy="966.5" r="2.5" fill="#143a78" fill-opacity="0.68" stroke="#143a78" stroke-opacity="0.35" stroke-width="1"/>
<circle cx="1658.6" cy="966.5" r="2.5" fill="#143a78" fill-opacity="0.68" stroke="#143a78" stroke-opacity="0.35" stroke-width="1"/>
<circle cx="1673.2" cy="928.4" r="10" fill="#143a78" fill-opacity="0.68" stroke="#143a78" stroke-opacity="0.35" stroke-width="1"/>
<circle cx="1687.8" cy="869.9" r="15" fill="#143a78" fill-opacity="0.68" stroke="#143a78" stroke-opacity="0.35" stroke-width="1"/>
<circle cx="1702.4" cy="715.3" r="22.4" fill="#143a78" fill-opacity="0.68" stroke="#143a78" stroke-opacity="0.35" stroke-width="1"/>
<circle cx="1717.0" cy="694" r="23.5" fill="#143a78" fill-opacity="0.68" stroke="#143a78" stroke-opacity="0.35" stroke-width="1"/>
<circle cx="1731.6" cy="803" r="18.6" fill="#143a78" fill-opacity="0.68" stroke="#143a78" stroke-opacity="0.35" stroke-width="1"/>
<circle cx="1746.2" cy="890.6" r="13.3" fill="#143a78" fill-opacity="0.68" stroke="#143a78" stroke-opacity="0.35" stroke-width="1"/>
<circle cx="1760.8" cy="949.5" r="7.7" fill="#143a78" fill-opacity="0.68" stroke="#143a78" stroke-opacity="0.35" stroke-width="1"/>
<circle cx="1775.4" cy="966.5" r="2.5" fill="#143a78" fill-opacity="0.68" stroke="#143a78" stroke-opacity="0.35" stroke-width="1"/>
<circle cx="1790.0" cy="949.5" r="7.7" fill="#143a78" fill-opacity="0.68" stroke="#143a78" stroke-opacity="0.35" stroke-width="1"/>
<circle cx="1804.6" cy="878.3" r="14.4" fill="#143a78" fill-opacity="0.68" stroke="#143a78" stroke-opacity="0.35" stroke-width="1"/>
<circle cx="1819.2" cy="661" r="24.5" fill="#143a78" fill-opacity="0.68" stroke="#143a78" stroke-opacity="0.35" stroke-width="1"/>
<circle cx="1833.8" cy="685.9" r="23.5" fill="#143a78" fill-opacity="0.68" stroke="#143a78" stroke-opacity="0.35" stroke-width="1"/>
<circle cx="1848.4" cy="832.4" r="16.8" fill="#143a78" fill-opacity="0.68" stroke="#143a78" stroke-opacity="0.35" stroke-width="1"/>
<circle cx="1863.0" cy="882.5" r="14" fill="#143a78" fill-opacity="0.68" stroke="#143a78" stroke-opacity="0.35" stroke-width="1"/>
<circle cx="1877.6" cy="953.3" r="7" fill="#143a78" fill-opacity="0.68" stroke="#143a78" stroke-opacity="0.35" stroke-width="1"/>
<circle cx="1892.2" cy="961.7" r="5.3" fill="#143a78" fill-opacity="0.68" stroke="#143a78" stroke-opacity="0.35" stroke-width="1"/>
<circle cx="1906.8" cy="953.3" r="7" fill="#143a78" fill-opacity="0.68" stroke="#143a78" stroke-opacity="0.35" stroke-width="1"/>
<circle cx="1921.4" cy="853.1" r="16" fill="#143a78" fill-opacity="0.68" stroke="#143a78" stroke-opacity="0.35" stroke-width="1"/>
<circle cx="1936.0" cy="723.7" r="22.4" fill="#143a78" fill-opacity="0.68" stroke="#143a78" stroke-opacity="0.35" stroke-width="1"/>
<circle cx="1950.6" cy="665.2" r="24.5" fill="#143a78" fill-opacity="0.68" stroke="#143a78" stroke-opacity="0.35" stroke-width="1"/>
<circle cx="1965.2" cy="786.5" r="19.5" fill="#143a78" fill-opacity="0.68" stroke="#143a78" stroke-opacity="0.35" stroke-width="1"/>
<circle cx="1979.8" cy="907.4" r="12.3" fill="#143a78" fill-opacity="0.68" stroke="#143a78" stroke-opacity="0.35" stroke-width="1"/>
<circle cx="1994.4" cy="966.5" r="2.5" fill="#143a78" fill-opacity="0.68" stroke="#143a78" stroke-opacity="0.35" stroke-width="1"/>
<circle cx="2009.0" cy="957.9" r="6.3" fill="#143a78" fill-opacity="0.68" stroke="#143a78" stroke-opacity="0.35" stroke-width="1"/>
<circle cx="2023.6" cy="957.9" r="6.3" fill="#143a78" fill-opacity="0.68" stroke="#143a78" stroke-opacity="0.35" stroke-width="1"/>
<circle cx="2038.2" cy="853.1" r="16" fill="#143a78" fill-opacity="0.68" stroke="#143a78" stroke-opacity="0.35" stroke-width="1"/>
<circle cx="2052.8" cy="732.2" r="21.7" fill="#143a78" fill-opacity="0.68" stroke="#143a78" stroke-opacity="0.35" stroke-width="1"/>
<circle cx="2067.4" cy="685.9" r="23.8" fill="#143a78" fill-opacity="0.68" stroke="#143a78" stroke-opacity="0.35" stroke-width="1"/>
<circle cx="2082.0" cy="765.5" r="20.3" fill="#143a78" fill-opacity="0.68" stroke="#143a78" stroke-opacity="0.35" stroke-width="1"/>
<circle cx="2096.6" cy="895.1" r="13.3" fill="#143a78" fill-opacity="0.68" stroke="#143a78" stroke-opacity="0.35" stroke-width="1"/>
<circle cx="2111.2" cy="957.9" r="6.3" fill="#143a78" fill-opacity="0.68" stroke="#143a78" stroke-opacity="0.35" stroke-width="1"/>
<circle cx="2125.8" cy="970.2" r="2.3" fill="#143a78" fill-opacity="0.68" stroke="#143a78" stroke-opacity="0.35" stroke-width="1"/>
<circle cx="2140.4" cy="920" r="11.2" fill="#143a78" fill-opacity="0.68" stroke="#143a78" stroke-opacity="0.35" stroke-width="1"/>
<circle cx="2155.0" cy="878.3" r="14.7" fill="#143a78" fill-opacity="0.68" stroke="#143a78" stroke-opacity="0.35" stroke-width="1"/>
<circle cx="2169.6" cy="690.1" r="23.5" fill="#143a78" fill-opacity="0.68" stroke="#143a78" stroke-opacity="0.35" stroke-width="1"/>
<circle cx="2184.2" cy="682" r="23.8" fill="#143a78" fill-opacity="0.68" stroke="#143a78" stroke-opacity="0.35" stroke-width="1"/>
<circle cx="2198.8" cy="807.2" r="19.3" fill="#143a78" fill-opacity="0.68" stroke="#143a78" stroke-opacity="0.35" stroke-width="1"/>
<circle cx="2213.4" cy="953.3" r="7.4" fill="#143a78" fill-opacity="0.68" stroke="#143a78" stroke-opacity="0.35" stroke-width="1"/>
</g>
<path d="M1388 635.6H1395.2V970.2M1388 970.2H2235.5M2235.5 635.6H2227.4V977.8M1395.4 970.2V977.8" stroke="#d6d6d6" stroke-width="1.2"/>
<path d="M1388 909.4H1395.2M1388 848.6H1395.2M1388 787.8H1395.2M1388 727.0H1395.2M1388 666.2H1395.2M2227.4 886.6H2235.5M2227.4 802.9H2235.5M2227.4 719.2H2235.5M1571.0 970.2V977.8M1804.6 970.2V977.8M2038.2 970.2V977.8" stroke="#d6d6d6" stroke-width="1.2"/>
<text x="1383.10" y="975.00" text-anchor="end" style="font-size:14.30px;fill:#545c6c;" >0</text>
<text x="1383.10" y="915.00" text-anchor="end" style="font-size:14.30px;fill:#545c6c;" >2,000</text>
<text x="1383.10" y="854.00" text-anchor="end" style="font-size:14.30px;fill:#545c6c;" >4,000</text>
<text x="1383.10" y="793.00" text-anchor="end" style="font-size:14.30px;fill:#545c6c;" >6,000</text>
<text x="1383.10" y="732.00" text-anchor="end" style="font-size:14.30px;fill:#545c6c;" >8,000</text>
<text x="1383.10" y="671.00" text-anchor="end" style="font-size:14.30px;fill:#545c6c;" >10,000</text>
<text x="2240.20" y="975.00" text-anchor="start" style="font-size:14.30px;fill:#545c6c;" >0</text>
<text x="2240.20" y="892.00" text-anchor="start" style="font-size:14.30px;fill:#545c6c;" >20</text>
<text x="2240.20" y="808.00" text-anchor="start" style="font-size:14.30px;fill:#545c6c;" >40</text>
<text x="2240.20" y="724.00" text-anchor="start" style="font-size:14.30px;fill:#545c6c;" >60</text>
<text x="2240.20" y="641.00" text-anchor="start" style="font-size:14.30px;fill:#545c6c;" >80</text>
<text x="1571.36" y="992.00" text-anchor="middle" style="font-size:14.30px;fill:#545c6c;letter-spacing:0.719px;" >2020-05-28 00:00</text>
<text x="1804.96" y="992.00" text-anchor="middle" style="font-size:14.30px;fill:#545c6c;letter-spacing:0.719px;" >2020-05-30 00:00</text>
<text x="2038.56" y="992.00" text-anchor="middle" style="font-size:14.30px;fill:#545c6c;letter-spacing:0.719px;" >2020-06-01 00:00</text>
<text x="1811.69" y="1015.00" text-anchor="middle" style="font-size:15.60px;fill:#545c6c;font-weight:700;letter-spacing:0.384px;" >timestamp per 3 hours</text>
<text x="0.05" y="0.00" text-anchor="middle" style="font-size:15.60px;fill:#545c6c;font-weight:700;letter-spacing:0.105px;" transform="translate(1324.3 802.4) rotate(-90)">Avg. Bytes</text>
<text x="0.12" y="0.00" text-anchor="middle" style="font-size:15.60px;fill:#545c6c;font-weight:700;letter-spacing:0.240px;" transform="translate(2277 802.8) rotate(-90)">Unique Visitors</text>
</svg>
</div></body></html>
